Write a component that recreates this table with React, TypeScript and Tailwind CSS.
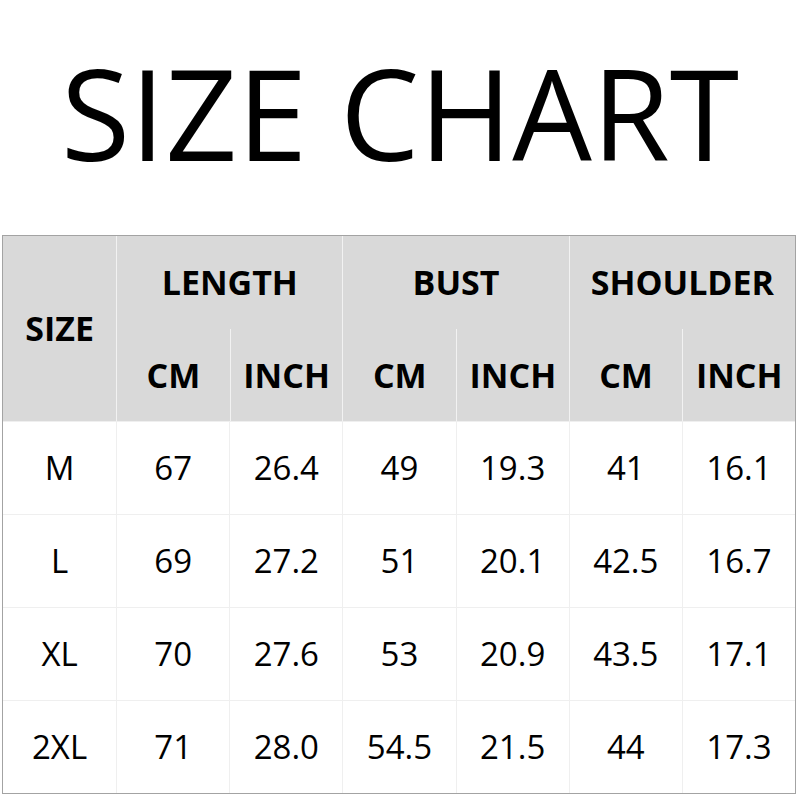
const groups = ["LENGTH", "BUST", "SHOULDER"];

const rows = [
	["M", "67", "26.4", "49", "19.3", "41", "16.1"],
	["L", "69", "27.2", "51", "20.1", "42.5", "16.7"],
	["XL", "70", "27.6", "53", "20.9", "43.5", "17.1"],
	["2XL", "71", "28.0", "54.5", "21.5", "44", "17.3"]
];

export default function App() {
	return (
		<div className="h-[800px] w-[800px] bg-white font-['Open_Sans',sans-serif] text-black">
			<div className="flex h-[235px] items-center justify-center pb-[12px]">
				<h1 className="text-[126px] leading-none font-normal">SIZE CHART</h1>
			</div>

			<div className="ml-[2px] w-[794px] border border-[#a3a3a3]">
				<div className="grid grid-cols-7 grid-rows-[93px_92px] bg-[#d9d9d9] font-bold">
					<div className="row-span-2 flex items-center justify-center text-[34px]">SIZE</div>
					{groups.map((g) => (
						<div
							key={g}
							className="col-span-2 flex items-center justify-center border-l border-[#f2f2f2] text-[34px]"
						>
							{g}
						</div>
					))}
					{groups.map((g) => (
						<div key={g + "-sub"} className="col-span-2 grid grid-cols-2 border-l border-[#f2f2f2]">
							<div className="flex items-center justify-center text-[34px]">CM</div>
							<div className="flex items-center justify-center border-l border-[#f2f2f2] text-[34px]">
								INCH
							</div>
						</div>
					))}
				</div>

				{rows.map((r) => (
					<div key={r[0]} className="grid h-[93px] grid-cols-7 border-t border-[#efefef] first:border-t-0">
						{r.map((v, i) => (
							<div
								key={i}
								className={
									i === 0
										? "flex items-center justify-center text-[33px]"
										: "flex items-center justify-center border-l border-[#efefef] text-[33px]"
								}
							>
								{v}
							</div>
						))}
					</div>
				))}
			</div>
		</div>
	);
}
